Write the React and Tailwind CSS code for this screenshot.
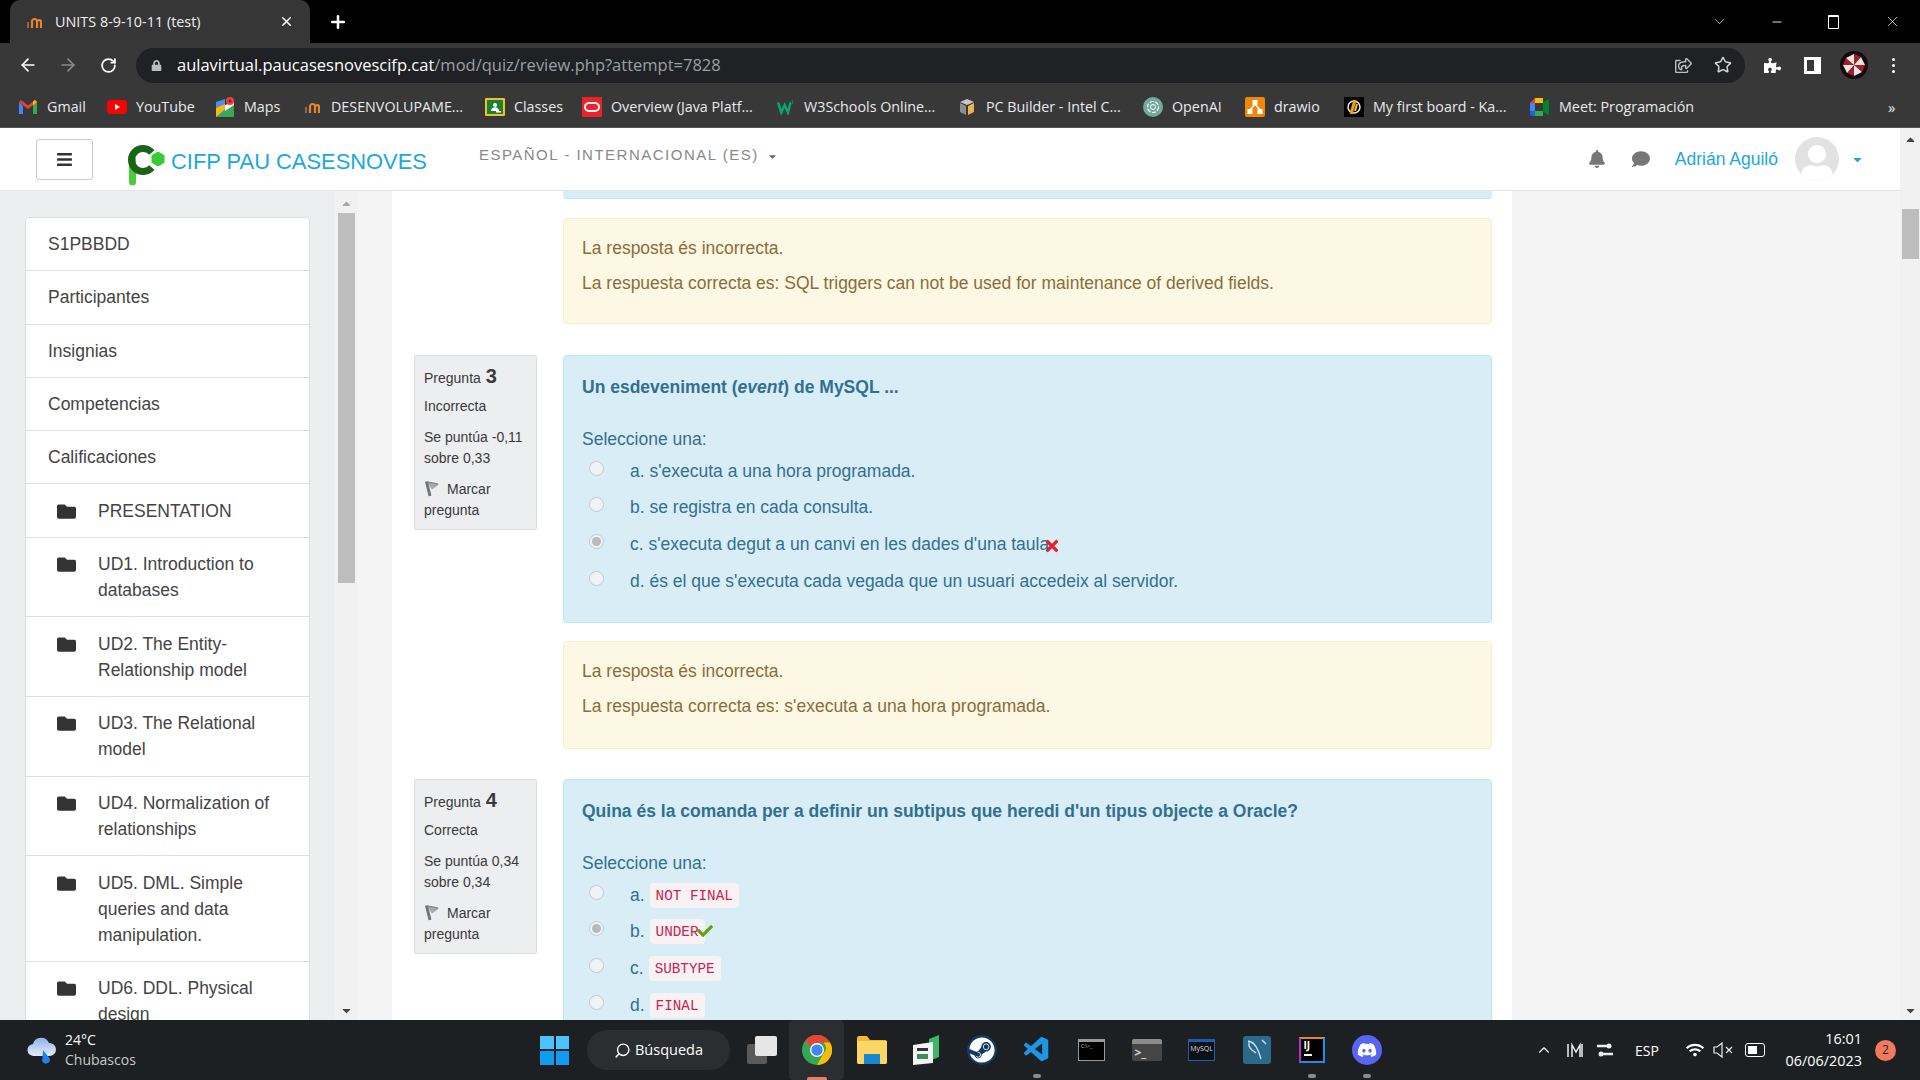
import { ArrowLeft, ArrowRight, RotateCw, Star, X, Plus, ChevronDown, ChevronUp, Minus, Search } from 'lucide-react'
import { FaBars, FaBell, FaCheck, FaComment, FaFolder, FaLock, FaPuzzlePiece, FaSteam, FaDiscord, FaCaretDown, FaCaretUp, FaTimes, FaUser, FaRegShareSquare, FaWifi } from 'react-icons/fa'
import { VscVscode } from 'react-icons/vsc'

const Moodle = () => (
  <svg width="16" height="16" viewBox="0 0 16 16" fill="none">
    <path d="M2 14V8" stroke="#8a6a50" strokeWidth="2" />
    <path d="M6 14V7.500A2.500 2.500 0 0 1 11 7.500V14M11 7.500A2.500 2.500 0 0 1 15 7V14" stroke="#e8842c" strokeWidth="2.200" />
  </svg>
)

const Gmail = () => (
  <svg width="18" height="14" viewBox="0 0 18 14">
    <path d="M0 2v12h4V6z" fill="#4285f4" />
    <path d="M18 2v12h-4V6z" fill="#34a853" />
    <path d="M0 2l9 7 9-7-2-2-7 5.500L2 0z" fill="#ea4335" />
    <path d="M14 6l4-4-2-2-2 1.500z" fill="#fbbc04" />
  </svg>
)

const YouTube = () => (
  <svg width="20" height="14" viewBox="0 0 20 14">
    <rect width="20" height="14" rx="4" fill="#f00" />
    <path d="M8 4l5 3-5 3z" fill="#fff" />
  </svg>
)

const Maps = () => (
  <svg width="18" height="20" viewBox="0 0 18 20">
    <path d="M0 5l9-3v15l-9 3z" fill="#4d8ff0" />
    <path d="M9 8l9-3v6l-9 6z" fill="#f5f5f5" />
    <path d="M0 20l18-12v12z" fill="#3aa757" />
    <path d="M0 11l9-4v5l-9 8z" fill="#fbbc04" />
    <circle cx="14" cy="4" r="4" fill="#ea4335" />
    <circle cx="14" cy="4" r="1.500" fill="#8c1d18" />
  </svg>
)

const Classroom = () => (
  <svg width="20" height="18" viewBox="0 0 20 18">
    <rect width="20" height="18" rx="1" fill="#f6bf26" />
    <rect x="2" y="2" width="16" height="14" fill="#188038" />
    <circle cx="10" cy="7" r="2" fill="#fff" />
    <path d="M6 13c0-5 8-5 8 0z" fill="#fff" />
    <rect x="11" y="13" width="5" height="1.500" fill="#fff" />
  </svg>
)

const Oracle = () => (
  <svg width="20" height="20" viewBox="0 0 20 20">
    <rect width="20" height="20" fill="#ee2126" />
    <rect x="3" y="6" width="14" height="8" rx="4" fill="none" stroke="#fff" strokeWidth="2" />
  </svg>
)

const W3 = () => (
  <svg width="17" height="15" viewBox="0 0 20 18" fill="none">
    <path d="M1 3l4 12 4-9 4 9 3-12" stroke="#04aa6d" strokeWidth="3" />
    <path d="M17 1h2l-1 2h1l-1 2" stroke="#04aa6d" strokeWidth="0.800" />
  </svg>
)

const PcBuilder = () => (
  <svg width="18" height="18" viewBox="0 0 18 18">
    <path d="M9 1l7 3-7 3-7-3z" fill="#c8c8c8" />
    <path d="M2 5l6 3v9l-6-3z" fill="#8d8d8d" />
    <path d="M16 5l-6 3v9l6-3z" fill="#e6b450" />
  </svg>
)

const OpenAi = () => (
  <svg width="20" height="20" viewBox="0 0 20 20" fill="none">
    <rect width="20" height="20" rx="10" fill="#74aa9c" />
    <circle cx="10" cy="10" r="5.500" stroke="#fff" strokeWidth="1.200" strokeDasharray="4 1.500" />
    <circle cx="10" cy="10" r="2.500" stroke="#fff" strokeWidth="1" />
  </svg>
)

const Drawio = () => (
  <svg width="20" height="20" viewBox="0 0 20 20">
    <rect width="20" height="20" rx="2" fill="#f08705" />
    <path d="M10 7L5 13M10 7l5 6" stroke="#fff" strokeWidth="1.500" />
    <rect x="7.500" y="3" width="5" height="5" rx="0.500" fill="#fff" />
    <rect x="2.500" y="12" width="5" height="5" rx="0.500" fill="#fff" />
    <rect x="12.500" y="12" width="5" height="5" rx="0.500" fill="#fff" />
  </svg>
)

const Kanban = () => (
  <svg width="20" height="20" viewBox="0 0 20 20" fill="none">
    <rect width="20" height="20" fill="#000" />
    <circle cx="10" cy="10" r="6" stroke="#eee" strokeWidth="1.500" />
    <path d="M11 3L7 17" stroke="#f59e0b" strokeWidth="3" />
    <path d="M13 7l-2 7" stroke="#f5c518" strokeWidth="2" />
  </svg>
)

const Meet = () => (
  <svg width="20" height="18" viewBox="0 0 20 18">
    <path d="M0 5l5-5h8v5H5v8H0z" fill="#ea4335" />
    <path d="M5 0h8v5H5z" fill="#fbbc04" />
    <path d="M0 5h5v8H0z" fill="#4285f4" />
    <path d="M0 13h5v5H2a2 2 0 0 1-2-2z" fill="#1967d2" />
    <path d="M5 13h8v5H5z" fill="#34a853" />
    <path d="M13 4v10l6 3V1z" fill="#00832d" />
  </svg>
)

const ChromeLogo = ({ size = 32 }) => (
  <svg width={size} height={size} viewBox="0 0 32 32">
    <circle cx="16" cy="16" r="16" fill="#34a853" />
    <path d="M16 0a16 16 0 0 1 13.900 8H16a8 8 0 0 0-7.300 4.700L3.500 5.700A16 16 0 0 1 16 0z" fill="#ea4335" />
    <path d="M29.900 8A16 16 0 0 1 16 32l6.900-12A8 8 0 0 0 22.900 8z" fill="#fbbc04" />
    <circle cx="16" cy="16" r="7.500" fill="#fff" />
    <circle cx="16" cy="16" r="6" fill="#4285f4" />
  </svg>
)

const UmbrellaAvatar = () => (
  <svg width="28" height="28" viewBox="0 0 28 28">
    <circle cx="14" cy="14" r="14" fill="#17090b" />
    <path d="M14 14L14 3 21 6zM14 14l11 0-3 7zM14 14l0 11-7-3zM14 14L3 14l3-7z" fill="#a81c27" />
    <path d="M14 14l7-8 4 8zM14 14l8 7-8 4zM14 14l-7 8-4-8zM14 14L6 7l8-4z" fill="#e6e6e6" />
  </svg>
)

const bookmarks = [
  { icon: <Gmail />, label: 'Gmail', w: 'w-[89px]' },
  { icon: <YouTube />, label: 'YouTube', w: 'w-[108px]' },
  { icon: <Maps />, label: 'Maps', w: 'w-[87px]' },
  { icon: <Moodle />, label: 'DESENVOLUPAME...', w: 'w-[183px]' },
  { icon: <Classroom />, label: 'Classes', w: 'w-[97px]' },
  { icon: <Oracle />, label: 'Overview (Java Platf...', w: 'w-[193px]' },
  { icon: <W3 />, label: 'W3Schools Online...', w: 'w-[182px]' },
  { icon: <PcBuilder />, label: 'PC Builder - Intel C...', w: 'w-[186px]' },
  { icon: <OpenAi />, label: 'OpenAI', w: 'w-[102px]' },
  { icon: <Drawio />, label: 'drawio', w: 'w-[99px]' },
  { icon: <Kanban />, label: 'My first board - Ka...', w: 'w-[186px]' },
  { icon: <Meet />, label: 'Meet: Programación', w: 'w-[170px]' },
]

const BrowserChrome = () => (
  <div className="shrink-0 font-['Open_Sans',sans-serif] text-[#e8eaed]">
    <div className="h-[43px] bg-black flex items-end relative">
      <div className="ml-[10px] w-[300px] h-[43px] bg-[#363636] rounded-t-[10px] flex items-center pl-[16px] pr-[16px]">
        <Moodle />
        <span className="ml-[13px] text-[14.400px] text-[#eee] flex-1">UNITS 8-9-10-11 (test)</span>
        <X size={15} strokeWidth={2.500} className="text-white" />
      </div>
      <Plus size={20} strokeWidth={3} className="ml-[18px] mb-[11px] text-white" />
      <div className="ml-auto h-[43px] flex items-center text-white">
        <ChevronDown size={17} strokeWidth={1} className="mr-[42px]" />
        <Minus size={14} strokeWidth={1.500} className="mr-[44px]" />
        <div className="w-[11px] h-[14px] border border-white border-t-2 rounded-[1px] mr-[45px]"></div>
        <X size={17} strokeWidth={1} className="mr-[19px]" />
      </div>
    </div>
    <div className="h-[44px] bg-[#383838] flex items-center">
      <ArrowLeft size={20} className="ml-[18px] text-white" />
      <ArrowRight size={20} className="ml-[20px] text-[#8a8a8a]" />
      <RotateCw size={17} strokeWidth={2.500} className="ml-[22px] text-white" />
      <div className="ml-[19px] w-[1609px] h-[35px] rounded-full bg-[#202124] flex items-center">
        <FaLock size={11} className="ml-[15px] text-[#bdbdbd]" />
        <span className="ml-[15px] mt-[1px] text-[16.500px] text-white">aulavirtual.paucasesnovescifp.cat</span>
        <span className="mt-[1px] text-[16.500px] text-[#9aa0a6]">/mod/quiz/review.php?attempt=7828</span>
        <FaRegShareSquare size={17} className="ml-auto text-[#bdbdbd]" />
        <Star size={18} className="ml-[22px] mr-[13px] text-[#d5d5d5]" />
      </div>
      <FaPuzzlePiece size={17} className="ml-[19px] text-white" />
      <div className="ml-[23px] w-[17px] h-[17px] border-[3px] border-white border-r-[7px]"></div>
      <div className="ml-[19px]"><UmbrellaAvatar /></div>
      <div className="ml-[24px] flex flex-col gap-[3px]">
        <span className="w-[3px] h-[3px] bg-white rounded-full"></span>
        <span className="w-[3px] h-[3px] bg-white rounded-full"></span>
        <span className="w-[3px] h-[3px] bg-white rounded-full"></span>
      </div>
    </div>
    <div className="h-[41px] bg-[#383838] border-b border-[#555] flex items-center pl-[18px]">
      {bookmarks.map((b) => (
        <div key={b.label} className={`${b.w} flex items-center shrink-0`}>
          <span className="w-[20px] flex justify-center">{b.icon}</span>
          <span className="ml-[9px] -mt-[1px] text-[14.300px] text-[#e8eaed] whitespace-nowrap">{b.label}</span>
        </div>
      ))}
      <span className="ml-[188px] text-[15px] text-[#e8eaed]">»</span>
    </div>
  </div>
)

const SiteLogo = () => (
  <svg className="ml-[35px] mt-[10px]" width="38" height="43" viewBox="0 0 38 43" fill="none">
    <path d="M4.500 17V39" stroke="#4ecb3a" strokeWidth="7" strokeLinecap="round" />
    <path d="M23.800 9.600A11.500 11.500 0 1 0 23.800 24.400" stroke="#1a6417" strokeWidth="7" />
    <path d="M30 8.500l6.500 3.750v7.500L30 23.500l-6.500-3.750v-7.500z" fill="#38cb38" />
  </svg>
)

const SiteHeader = () => (
  <div className="h-[63px] shrink-0 bg-white border-b border-[#e4e4e4] flex items-center relative">
    <div className="ml-[36px] w-[57px] h-[41px] border border-[#ccc] rounded-[3px] flex items-center justify-center text-[#333]">
      <FaBars size={17} />
    </div>
    <SiteLogo />
    <span className="ml-[5px] mt-[7px] text-[21.900px] text-[#1ba8dc]">CIFP PAU CASESNOVES</span>
    <span className="ml-[52px] -mt-[7px] text-[15px] tracking-[1.500px] text-[#888]">ESPAÑOL - INTERNACIONAL (ES)</span>
    <FaCaretDown size={11} className="ml-[8px] -mt-[6px] text-[#666]" />
    <div className="ml-auto flex items-center mr-[36px]">
      <FaBell size={18} className="text-[#777]" />
      <FaComment size={18} className="ml-[26px] text-[#777]" />
      <span className="ml-[25px] text-[17.500px] text-[#1ba8dc]">Adrián Aguiló</span>
      <div className="ml-[17px] w-[44px] h-[44px] rounded-full bg-[#e2e2e2] overflow-hidden flex items-end justify-center">
        <FaUser size={36} className="text-white" />
      </div>
      <FaCaretDown size={13} className="ml-[12px] text-[#1ba8dc]" />
    </div>
  </div>
)

const navItems = ['S1PBBDD', 'Participantes', 'Insignias', 'Competencias', 'Calificaciones']
const folders = [
  'PRESENTATION',
  'UD1. Introduction to databases',
  'UD2. The Entity-Relationship model',
  'UD3. The Relational model',
  'UD4. Normalization of relationships',
  'UD5. DML. Simple queries and data manipulation.',
  'UD6. DDL. Physical design',
]

const Sidebar = () => (
  <div className="w-[392px] shrink-0 bg-[#eceef0] flex overflow-hidden text-[17.500px] text-[#444] leading-[26px]">
    <div className="ml-[25px] mt-[26px] w-[285px] h-fit bg-white border border-[#dfdfdf] rounded-[4px] shrink-0">
      {navItems.map((t) => (
        <div key={t} className="h-[53.250px] px-[22px] border-b border-[#dfdfdf] flex items-center">{t}</div>
      ))}
      {folders.map((t) => (
        <div key={t} className="px-[31px] py-[13.300px] border-b border-[#dfdfdf] flex items-start">
          <FaFolder size={19} className="shrink-0 mt-[4px] text-[#333]" />
          <span className="ml-[22px] w-[180px]">{t}</span>
        </div>
      ))}
    </div>
    <div className="ml-[25px] w-[22px] bg-[#f1f1f1] flex flex-col items-center">
      <FaCaretUp size={13} className="mt-[6px] text-[#aaa]" />
      <div className="w-[17px] h-[370px] bg-[#bdbdbd] mt-[3px]"></div>
      <FaCaretDown size={13} className="mt-auto mb-[3px] text-[#444]" />
    </div>
    <div className="flex-1 bg-[#f4f4f4]"></div>
  </div>
)

const Feedback = ({ answer, tall }) => (
  <div className={`${tall ? 'h-[108px]' : 'h-[106px]'} bg-[#fcf8e3] border border-[#faebcc] rounded-[4px] px-[18px] pt-[12px] text-[#8a6d3b] leading-[35px]`}>
    <p>La resposta és incorrecta.</p>
    <p>La respuesta correcta es: {answer}</p>
  </div>
)

const QuestionInfo = ({ n, state, score, max }) => (
  <div className="w-[123px] shrink-0 h-[175px] bg-[#eceef0] border border-[#dcdfe1] rounded-[2px] px-[9px] pt-[6.500px] text-[14px] text-[#3a3a3a] leading-[21px]">
    <div className="flex items-baseline leading-[27px]">Pregunta <b className="ml-[5px] text-[20px]">{n}</b></div>
    <div className="mt-[4px]">{state}</div>
    <div className="mt-[10px]">Se puntúa {score} sobre {max}</div>
    <div className="mt-[10px]">
      <svg className="inline mr-[7px] -mt-[3px]" width="16" height="17" viewBox="0 0 16 17" fill="none">
        <path d="M3 2l12 2.500-7 5z" fill="#a9a9a9" />
        <path d="M2.500 1.500L6 16" stroke="#757575" strokeWidth="3" />
        <path d="M3 2l11 2" stroke="#8a8a8a" strokeWidth="1.500" />
      </svg>
      Marcar pregunta
    </div>
  </div>
)

const Radio = ({ checked }) => (
  <span className="w-[15px] h-[15px] rounded-full border border-[#c3c9cc] bg-[#edf3f6] shrink-0 flex items-center justify-center">
    {checked && <span className="w-[9px] h-[9px] rounded-full bg-[#b4babd]"></span>}
  </span>
)

const Option = ({ checked, children }) => (
  <div className="h-[36.700px] flex items-start leading-[24px]">
    <span className="ml-[7px] mt-[-3px]"><Radio checked={checked} /></span>
    <span className="ml-[26px] mt-[-5px] flex items-start whitespace-nowrap">{children}</span>
  </div>
)

const Code = ({ children }) => (
  <code className="ml-[5px] h-[25px] px-[6px] bg-[#f9f2f4] rounded-[4px] font-['Liberation_Mono',monospace] text-[14.300px] leading-[27px] text-[#c7254e]">{children}</code>
)

const CrossMark = () => <FaTimes size={18} className="-ml-[6px] mt-[5px] text-[#e81f2c]" />
const CheckMark = () => <FaCheck size={16} className="-ml-[8px] mt-[4px] text-[#65a30d]" />

const QuizMain = () => (
  <div className="w-[1120px] shrink-0 bg-white pl-[22px] pr-[20px] overflow-hidden text-[17.500px] text-[#31708f]">
    <div className="ml-[149px] h-[8px] bg-[#d9edf7] border-b border-[#bce8f1] rounded-b-[4px]"></div>
    <div className="ml-[149px] mt-[19px]">
      <Feedback answer="SQL triggers can not be used for maintenance of derived fields." />
    </div>
    <div className="mt-[31px] flex">
      <QuestionInfo n="3" state="Incorrecta" score="-0,11" max="0,33" />
      <div className="ml-[26px] flex-1 h-[268px] bg-[#d9edf7] border border-[#bce8f1] rounded-[4px] px-[18px] pt-[19px]">
        <p className="font-bold leading-[24px]">Un esdeveniment (<i>event</i>) de MySQL ...</p>
        <p className="mt-[28px] mb-[12.500px] leading-[24px]">Seleccione una:</p>
        <Option>a. s'executa a una hora programada.</Option>
        <Option>b. se registra en cada consulta.</Option>
        <Option checked>c. s'executa degut a un canvi en les dades d'una taula<CrossMark /></Option>
        <Option>d. és el que s'executa cada vegada que un usuari accedeix al servidor.</Option>
      </div>
    </div>
    <div className="ml-[149px] mt-[18px]">
      <Feedback tall answer="s'executa a una hora programada." />
    </div>
    <div className="mt-[30px] flex">
      <QuestionInfo n="4" state="Correcta" score="0,34" max="0,34" />
      <div className="ml-[26px] flex-1 h-[300px] bg-[#d9edf7] border border-[#bce8f1] rounded-[4px] px-[18px] pt-[19px]">
        <p className="font-bold leading-[24px]">Quina és la comanda per a definir un subtipus que heredi d'un tipus objecte a Oracle?</p>
        <p className="mt-[28px] mb-[12.500px] leading-[24px]">Seleccione una:</p>
        <Option>a.<Code>NOT FINAL</Code></Option>
        <Option checked>b.<Code>UNDER</Code><CheckMark /></Option>
        <Option>c.<Code>SUBTYPE</Code></Option>
        <Option>d.<Code>FINAL</Code></Option>
      </div>
    </div>
  </div>
)

const PageScrollbar = () => (
  <div className="w-[20px] shrink-0 bg-[#f1f1f1] flex flex-col items-center">
    <FaCaretUp size={13} className="mt-[5px] text-[#444]" />
    <div className="w-[17px] h-[50px] bg-[#bdbdbd] mt-[63px]"></div>
    <FaCaretDown size={13} className="mt-auto mb-[3px] text-[#444]" />
  </div>
)

const AppSlot = ({ children, dot, active }) => (
  <div className={`w-[55px] h-[60px] flex items-center justify-center relative ${active ? 'bg-[#2b2e31] rounded-[5px] h-[50px]' : ''}`}>
    {children}
    {dot && <span className="absolute bottom-[2px] w-[8px] h-[4px] rounded-full bg-[#8c8c8c]"></span>}
    {active && <span className="absolute -bottom-[1px] w-[20px] h-[4px] rounded-full bg-[#ee7a62]"></span>}
  </div>
)

const WeatherIcon = () => (
  <svg className="ml-[26px]" width="31" height="28" viewBox="0 0 31 28">
    <defs>
      <linearGradient id="cloud" x1="0" y1="0" x2="0" y2="1">
        <stop offset="0" stopColor="#8fb2ea" />
        <stop offset="1" stopColor="#e3ecfa" />
      </linearGradient>
    </defs>
    <path d="M8 20a6 6 0 0 1-1-12A8.500 8.500 0 0 1 23 7a6.500 6.500 0 0 1 1 13z" fill="url(#cloud)" />
    <path d="M17 14l7 9a4.200 4.200 0 0 1-7.800 2.500z" fill="#1f7fee" />
  </svg>
)

const Taskbar = () => (
  <div className="h-[60px] shrink-0 bg-[#1c2023] flex items-center font-['Open_Sans',sans-serif] text-white">
    <WeatherIcon />
    <div className="ml-[8px] w-[100px] text-[14px] leading-[20px] shrink-0">
      <div>24°C</div>
      <div className="text-[#c9c9c9]">Chubascos</div>
    </div>
    <div className="ml-[375px] grid grid-cols-2 gap-[2px] w-[29px] h-[29px] shrink-0">
      <span className="bg-[#4cc2ff]"></span>
      <span className="bg-[#4cc2ff]"></span>
      <span className="bg-[#0f9bf0]"></span>
      <span className="bg-[#0f9bf0]"></span>
    </div>
    <div className="ml-[18px] w-[143px] h-[40px] rounded-full bg-[#2b2e31] flex items-center justify-center gap-[4px] text-[14.500px] shrink-0">
      <Search size={17} className="-scale-x-100" />
      Búsqueda
    </div>
    <div className="ml-[4px] flex items-center">
      <AppSlot>
        <div className="relative w-[30px] h-[28px]">
          <span className="absolute left-0 bottom-0 w-[20px] h-[20px] bg-[#5a5a5a] rounded-[2px]"></span>
          <span className="absolute right-0 top-0 w-[22px] h-[20px] bg-[#e6e6e6] rounded-[2px]"></span>
        </div>
      </AppSlot>
      <AppSlot active><ChromeLogo size={30} /></AppSlot>
      <AppSlot>
        <svg width="30" height="28" viewBox="0 0 30 28">
          <path d="M0 2a2 2 0 0 1 2-2h8l3 4h15a2 2 0 0 1 2 2v20a2 2 0 0 1-2 2H2a2 2 0 0 1-2-2z" fill="#f5b92e" />
          <path d="M0 5h30v21a2 2 0 0 1-2 2H2a2 2 0 0 1-2-2z" fill="#fcd766" />
          <rect x="7" y="18" width="16" height="10" fill="#1a86d0" />
        </svg>
      </AppSlot>
      <AppSlot>
        <svg width="28" height="30" viewBox="0 0 28 30">
          <path d="M16 4l10-4v22l-10 4z" fill="#3fb56a" />
          <path d="M0 10l20-3v21L0 30z" fill="#f4f4f4" />
          <rect x="4" y="13" width="11" height="3" fill="#333" />
          <rect x="4" y="19" width="11" height="5" fill="#3d8f57" />
        </svg>
      </AppSlot>
      <AppSlot><div className="w-[30px] h-[30px] rounded-full bg-[#123a63] flex items-center justify-center"><FaSteam size={26} className="text-white" /></div></AppSlot>
      <AppSlot dot><VscVscode size={30} className="text-[#1b97e6]" /></AppSlot>
      <AppSlot>
        <div className="w-[27px] h-[22px] bg-black border border-[#9a9a9a] border-t-[3px] text-[5px] leading-[8px] px-[2px] text-[#ccc]">C:\&gt;_</div>
      </AppSlot>
      <AppSlot>
        <div className="w-[30px] h-[22px] bg-[#454545] rounded-[2px] border-t-[5px] border-[#8c8c8c] flex items-center pl-[3px] text-[12px] font-bold leading-none text-[#ddd]">&gt;_</div>
      </AppSlot>
      <AppSlot>
        <div className="w-[27px] h-[22px] bg-[#0b0f18] border border-[#1c5fb0] border-t-[3px] text-[7px] leading-[14px] text-center text-[#ddd]">MySQL</div>
      </AppSlot>
      <AppSlot>
        <div className="w-[28px] h-[28px] bg-[#2c6a8c] rounded-[3px] flex items-center justify-center">
          <svg width="22" height="24" viewBox="0 0 22 24" fill="none">
            <path d="M2 3c7 1 10 8 13 18M3 4c-1 6 3 8 7 11M16 2l4 4" stroke="#cde3ef" strokeWidth="1.300" />
          </svg>
        </div>
      </AppSlot>
      <AppSlot dot>
        <div className="w-[26px] h-[26px] bg-black border-2 border-t-[#e8832a] border-l-[#c02ad0] border-r-[#1c8ef0] border-b-[#1c8ef0] text-[10px] font-bold leading-[12px] pl-[3px]">IJ<div className="w-[8px] h-[2px] bg-white mt-[3px]"></div></div>
      </AppSlot>
      <AppSlot dot><div className="w-[30px] h-[30px] rounded-full bg-[#5865f2] flex items-center justify-center"><FaDiscord size={20} className="text-white" /></div></AppSlot>
    </div>
    <div className="ml-[141px] flex items-center text-[14px] shrink-0">
      <ChevronUp size={18} strokeWidth={1.500} />
      <svg className="ml-[13px]" width="18" height="18" viewBox="0 0 18 18" fill="none">
        <path d="M2 3v13M6 16V4l4 7 4-7v12M16 3v13" stroke="#eee" strokeWidth="1.500" />
      </svg>
      <svg className="ml-[12px]" width="18" height="18" viewBox="0 0 18 18" fill="none">
        <path d="M1 5h12M5 13h12" stroke="#eee" strokeWidth="2.500" />
        <circle cx="13" cy="5" r="2.500" fill="#eee" />
        <circle cx="5" cy="13" r="2.500" fill="#eee" />
      </svg>
      <span className="ml-[21px]">ESP</span>
      <FaWifi size={18} className="ml-[27px]" />
      <svg className="ml-[9px]" width="20" height="18" viewBox="0 0 20 18" fill="none">
        <path d="M1 6h3l5-4v14l-5-4H1zM13 6l6 6M19 6l-6 6" stroke="#eee" strokeWidth="1.200" />
      </svg>
      <div className="ml-[12px] w-[20px] h-[14px] border-[1.500px] border-white rounded-[3px] p-[2px]"><div className="w-[9px] h-full bg-white"></div></div>
      <div className="ml-[9px] w-[88px] text-right text-[14.400px] leading-[22px]">
        <div>16:01</div>
        <div>06/06/2023</div>
      </div>
      <span className="ml-[13px] w-[21px] h-[21px] rounded-full bg-[#f07a5b] text-[#1c2023] flex items-center justify-center text-[12px]">2</span>
    </div>
  </div>
)

export default function App() {
  return (
    <div className="w-[1920px] h-[1080px] flex flex-col overflow-hidden font-['Liberation_Sans',sans-serif]">
      <BrowserChrome />
      <div className="flex-1 min-h-0 flex">
        <div className="flex-1 min-w-0 flex flex-col">
          <SiteHeader />
          <div className="flex-1 min-h-0 flex">
            <Sidebar />
            <QuizMain />
            <div className="flex-1 bg-[#f4f4f4]"></div>
          </div>
        </div>
        <PageScrollbar />
      </div>
      <Taskbar />
    </div>
  )
}
